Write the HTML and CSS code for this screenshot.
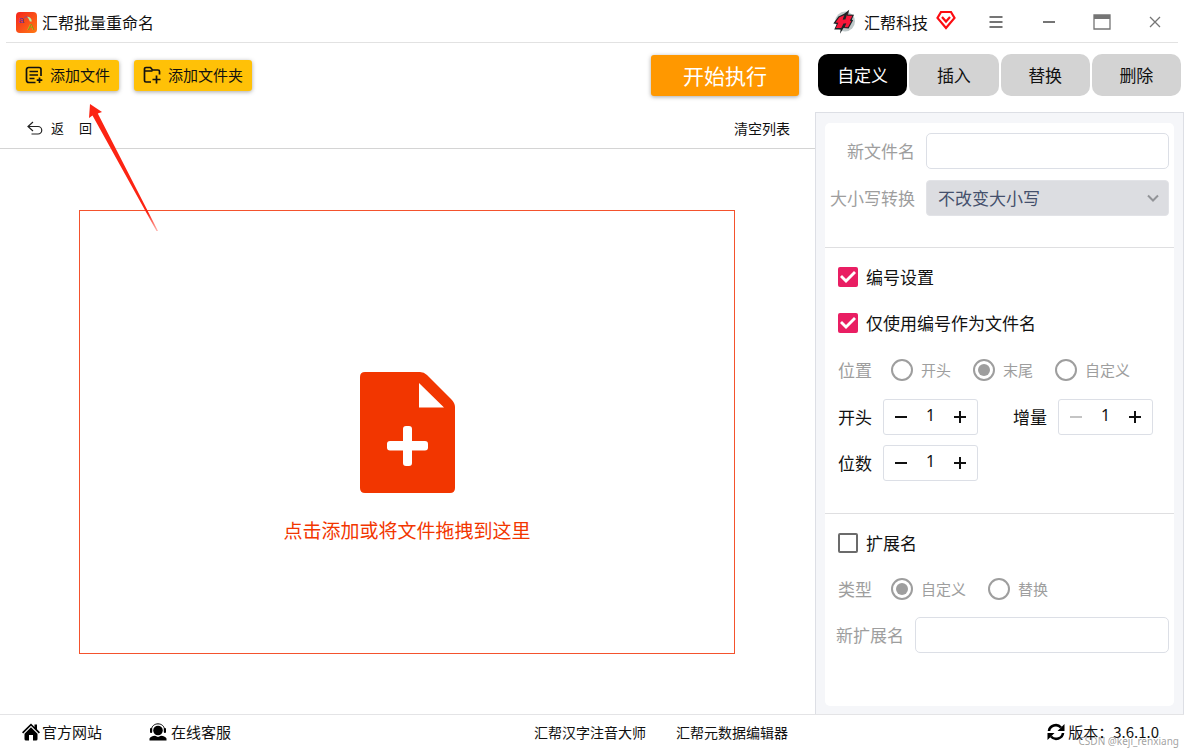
FILE: index.html
```html
<!DOCTYPE html>
<html lang="zh-CN">
<head>
<meta charset="utf-8">
<meta name="viewport" content="width=device-width, initial-scale=1">
<title>汇帮批量重命名</title>
<link rel="stylesheet" href="styles.css">
</head>
<body>
<header class="titlebar">
  <svg class="app-logo" viewBox="0 0 22 22" aria-hidden="true">
    <defs>
      <linearGradient id="logo-bg" x1="0" y1="0" x2="1" y2="1">
        <stop offset="0" stop-color="#f5231c"/>
        <stop offset="1" stop-color="#ff7a14"/>
      </linearGradient>
    </defs>
    <rect width="22" height="22" rx="4" fill="url(#logo-bg)"/>
    <text x="3" y="11" class="logo-small">a</text>
    <text x="12" y="19" class="logo-large">A</text>
    <path d="M8.500 6.500C10 4.500 12 4.800 13 6" fill="none" stroke="#7a4a9a" stroke-width="1"/>
    <path d="M11.500 5C14.500 5 16.500 7 16.500 10L14.500 10C14 8 13 6.500 11.500 5Z" fill="#b9f0a8"/>
  </svg>
  <h1 class="app-name">汇帮批量重命名</h1>
  <div class="brand">
    <svg class="brand-logo" viewBox="0 0 72 84" aria-hidden="true">
      <circle cx="41" cy="42" r="31" fill="#bfc8c9"/>
      <path d="M54 5L50 20L69 21L62 36L66 38L52 64L36 62L25 80L27 67L7 67L15 50L4 48L20 26L38 18Z" fill="#1b2326"/>
      <path d="M49 13L47 24H64L56 39L60 41L50 60H38L43 48H36L29 62H12L20 46L11 45L23 29L40 22L35 36H42Z" fill="#f9163a"/>
      <path d="M40 22L35 36M43 48L38 60" fill="none" stroke="#1b2326" stroke-width="3"/>
    </svg>
    <span>汇帮科技</span>
    <svg class="gem" viewBox="0 0 20 20" fill="none" stroke="#fc0d12" aria-hidden="true">
      <path d="M5 2H15L18.500 8L10 18L1.500 8Z" stroke-width="2.200"/>
      <path d="M6 7L10 11.500L14 7" stroke-width="2.200"/>
    </svg>
  </div>
  <div class="window-controls">
    <button type="button" aria-label="菜单"><svg viewBox="0 0 20 20"><path d="M3.500 5H16.500M3.500 10H16.500M3.500 15H16.500" stroke-width="2"/></svg></button>
    <button type="button" aria-label="最小化"><svg viewBox="0 0 20 20"><path d="M4 10H16" stroke-width="2"/></svg></button>
    <button type="button" aria-label="最大化"><svg viewBox="0 0 20 20"><path d="M2 3H18V17H2Z" stroke-width="1.300"/><path d="M2 5H18" stroke-width="4"/></svg></button>
    <button type="button" aria-label="关闭"><svg viewBox="0 0 20 20"><path d="M5 5L15 15M15 5L5 15" stroke-width="1.300"/></svg></button>
  </div>
</header>

<div class="workspace">
  <main class="files">
    <div class="toolbar">
      <button type="button" class="add-btn">
        <svg viewBox="0 0 18 18" aria-hidden="true"><path d="M16 10V3.500A2 2 0 0 0 14 1.500H3.500A2 2 0 0 0 1.500 3.500V14A2.500 2.500 0 0 0 4 16.500H10.500M4.500 5.500H13M4.500 9H13M4.500 12.500H9.500M14.500 11.500V17M11.700 14.200H17.300"/></svg>
        添加文件
      </button>
      <button type="button" class="add-btn">
        <svg viewBox="0 0 18 18" aria-hidden="true"><path d="M8 16H3A1.500 1.500 0 0 1 1.500 14.500V3A1.500 1.500 0 0 1 3 1.500H7.500L9.500 4H15A1.500 1.500 0 0 1 16.500 5.500V8.500M1.500 5H9.500M13.500 9.500V17.500M9.500 13.500H17.500"/></svg>
        添加文件夹
      </button>
      <button type="button" class="run-btn">开始执行</button>
    </div>
    <div class="list-bar">
      <button type="button" class="back-btn">
        <svg viewBox="0 0 16 16" aria-hidden="true"><path d="M6 2L1 6.500L6 11M1 6.500H11A3.700 3.700 0 0 1 11 14H4.500"/></svg>
        <span>返</span><span class="back-end">回</span>
      </button>
      <button type="button" class="clear-btn">清空列表</button>
    </div>
    <div class="drop-wrap">
      <button type="button" class="drop-zone">
        <svg viewBox="0 0 95 121" aria-hidden="true">
          <path fill-rule="evenodd" d="M5 0H60Q64 0 67 3L91 27Q95 31 95 35V116Q95 121 90 121H5Q0 121 0 116V5Q0 0 5 0ZM59 11V35.500H84ZM46 54Q43 54 43 57V69H30Q27 69 27 72V75.500Q27 78.500 30 78.500H43V91Q43 94 46 94H49Q52 94 52 91V78.500H65Q68 78.500 68 75.500V72Q68 69 65 69H52V57Q52 54 49 54Z"/>
        </svg>
        点击添加或将文件拖拽到这里
      </button>
    </div>
    <svg class="pointer-arrow" viewBox="0 0 70 128" aria-hidden="true">
      <defs>
        <linearGradient id="arrow-fade" gradientUnits="userSpaceOnUse" x1="0" y1="0" x2="0" y2="128">
          <stop offset="0.850" stop-color="#fc2413"/>
          <stop offset="1" stop-color="#fc2413" stop-opacity="0.300"/>
        </linearGradient>
      </defs>
      <path d="M1 0L13 8L8.800 9.500L69 127L67.500 127L3.500 11.500L0 14Z" fill="url(#arrow-fade)"/>
    </svg>
  </main>

  <div class="side">
    <nav class="tabs">
      <button type="button" class="tab tab-active">自定义</button>
      <button type="button" class="tab">插入</button>
      <button type="button" class="tab">替换</button>
      <button type="button" class="tab">删除</button>
    </nav>
    <div class="panel">
      <form class="card">
        <section class="section section-name">
          <div class="field">
            <label class="muted" for="new-name">新文件名</label>
            <input class="text-box" id="new-name" type="text">
          </div>
          <div class="field">
            <label class="muted" for="case">大小写转换</label>
            <div class="select-wrap">
              <select id="case" disabled><option>不改变大小写</option></select>
              <svg viewBox="0 0 12 8" aria-hidden="true"><path d="M1 1.500L6 6.500L11 1.500"/></svg>
            </div>
          </div>
        </section>

        <section class="section section-number">
          <label class="check"><input type="checkbox" checked>编号设置</label>
          <label class="check"><input type="checkbox" checked>仅使用编号作为文件名</label>
          <div class="radios position-row" role="radiogroup" aria-label="位置">
            <span class="radios-title">位置</span>
            <label><input type="radio" name="position" disabled>开头</label>
            <label><input type="radio" name="position" checked disabled>末尾</label>
            <label><input type="radio" name="position" disabled>自定义</label>
          </div>
          <div class="steppers">
            <div class="step-field">
              <label for="start">开头</label>
              <div class="stepper">
                <button type="button" aria-label="减少"><svg viewBox="0 0 14 14"><path d="M1 7H13"/></svg></button>
                <input id="start" type="text" value="1">
                <button type="button" aria-label="增加"><svg viewBox="0 0 14 14"><path d="M1 7H13M7 1V13"/></svg></button>
              </div>
            </div>
            <div class="step-field">
              <label for="increment">增量</label>
              <div class="stepper">
                <button type="button" aria-label="减少" disabled><svg viewBox="0 0 14 14"><path d="M1 7H13"/></svg></button>
                <input id="increment" type="text" value="1">
                <button type="button" aria-label="增加"><svg viewBox="0 0 14 14"><path d="M1 7H13M7 1V13"/></svg></button>
              </div>
            </div>
          </div>
          <div class="steppers">
            <div class="step-field">
              <label for="digits">位数</label>
              <div class="stepper">
                <button type="button" aria-label="减少"><svg viewBox="0 0 14 14"><path d="M1 7H13"/></svg></button>
                <input id="digits" type="text" value="1">
                <button type="button" aria-label="增加"><svg viewBox="0 0 14 14"><path d="M1 7H13M7 1V13"/></svg></button>
              </div>
            </div>
          </div>
        </section>

        <section class="section section-ext">
          <label class="check"><input type="checkbox">扩展名</label>
          <div class="radios" role="radiogroup" aria-label="类型">
            <span class="radios-title">类型</span>
            <label><input type="radio" name="kind" checked disabled>自定义</label>
            <label><input type="radio" name="kind" disabled>替换</label>
          </div>
          <div class="field field-ext">
            <label class="muted" for="new-ext">新扩展名</label>
            <input class="text-box" id="new-ext" type="text">
          </div>
        </section>
      </form>
    </div>
  </div>
</div>

<footer class="statusbar">
  <div class="status-main">
    <div class="support">
      <a href="#site">
        <svg viewBox="0 0 18 18" aria-hidden="true"><path d="M9 0.500L12.500 4V1.500H15V6.300L18 9.300L16.800 10.500L9 2.800L1.200 10.500L0 9.300Z"/><path d="M9 4.300L15.500 10.700V16Q15.500 17.500 14 17.500H11V12H7V17.500H4Q2.500 17.500 2.500 16V10.700Z"/></svg>
        官方网站
      </a>
      <a href="#service" class="service">
        <svg viewBox="0 0 18 18" aria-hidden="true"><circle cx="9" cy="7.500" r="4.800"/><path d="M2.500 7C2.500 -1.200 15.500 -1.200 15.500 7" fill="none" stroke="#000"/><rect x="1" y="5" width="2.200" height="5" rx="1"/><rect x="14.800" y="5" width="2.200" height="5" rx="1"/><path d="M0.500 17.500V15.500Q1.500 13.200 6 12.800L9 14L12 12.800Q16.500 13.200 17.500 15.500V17.500Z"/></svg>
        在线客服
      </a>
    </div>
    <div class="products">
      <a href="#pinyin">汇帮汉字注音大师</a>
      <a href="#metadata">汇帮元数据编辑器</a>
    </div>
  </div>
  <div class="version">
    <svg viewBox="0 0 18 18" aria-hidden="true"><path d="M2 8C2.500 2.500 10 0 14 4.500M16 10C15.500 15.500 8 18 4 13.500" fill="none" stroke="#000" stroke-width="2.600"/><path d="M17.500 1V8H10.500ZM0.500 17V10H7.500Z"/></svg>
    版本：3.6.1.0
    <span class="watermark">CSDN @keji_renxiang</span>
  </div>
</footer>
</body>
</html>
```
FILE: styles.css
```css
* {
  box-sizing: border-box;
}

body {
  margin: 0;
  min-height: 100vh;
  display: flex;
  flex-direction: column;
  background: #fff;
  color: #111;
  font: 15px/24px "Noto Sans CJK SC", sans-serif;
}

button,
input,
select {
  margin: 0;
  padding: 0;
  border: 0;
  background: none;
  color: inherit;
  font: inherit;
}

svg {
  display: block;
  flex: none;
}

a {
  color: inherit;
  text-decoration: none;
}

/* Title bar */
.titlebar {
  display: flex;
  align-items: center;
  height: 43px;
  margin: 0 6px;
  padding: 2px 13px 0 10px;
  border-bottom: 1px solid #e2e2e2;
  font-size: 16px;
}

.app-logo {
  width: 21px;
  height: 21px;
}

.logo-small,
.logo-large {
  font: 10px "Liberation Sans", sans-serif;
  fill: #5a35a8;
}

.logo-large {
  fill: #5fc61e;
}

.app-name {
  margin: 0 auto 0 5px;
  font-size: 16px;
  font-weight: 400;
}

.brand {
  display: flex;
  align-items: center;
  margin-right: 30px;
}

.brand-logo {
  width: 23px;
  height: 27px;
  margin: 0 9px 2px 0;
}

.gem {
  width: 20px;
  height: 20px;
  margin: 0 0 5px 8px;
}

.window-controls {
  display: flex;
  gap: 33px;
}

.window-controls svg {
  width: 20px;
  height: 20px;
  fill: none;
  stroke: #757575;
}

/* Main layout */
.workspace {
  flex: 1;
  display: flex;
}

.files {
  position: relative;
  flex: 1;
  display: flex;
  flex-direction: column;
}

.side {
  width: 369px;
  display: flex;
  flex-direction: column;
}

/* Left side */
.toolbar {
  display: flex;
  align-items: center;
  gap: 15px;
  padding: 12px 16px;
}

.add-btn {
  display: flex;
  align-items: center;
  gap: 7px;
  height: 31px;
  padding: 0 9px 2px;
  border-radius: 3px;
  background: #ffc107;
  box-shadow: 0 1px 4px rgba(0, 0, 0, 0.35);
}

.add-btn svg {
  width: 18px;
  height: 18px;
  fill: none;
  stroke: #111;
  stroke-width: 1.7;
}

.run-btn {
  width: 148px;
  height: 41px;
  margin-left: auto;
  padding-bottom: 2px;
  border-radius: 3px;
  background: #ff9800;
  box-shadow: 0 1px 4px rgba(0, 0, 0, 0.35);
  color: #fff;
  font-size: 21px;
}

.list-bar {
  display: flex;
  align-items: center;
  justify-content: space-between;
  height: 41px;
  padding: 0 25px 1px 27px;
  border-bottom: 1px solid #d4d4d4;
}

.back-btn {
  display: flex;
  align-items: center;
  gap: 8px;
  font-size: 13px;
}

.back-btn svg {
  width: 16px;
  height: 16px;
  fill: none;
  stroke: #222;
  stroke-width: 1.2;
}

.back-end {
  margin-left: 7px;
}

.clear-btn {
  font-size: 14px;
}

.drop-wrap {
  flex: 1;
  display: flex;
  padding: 61px 80px 60px 79px;
}

.drop-zone {
  flex: 1;
  display: flex;
  flex-direction: column;
  align-items: center;
  justify-content: center;
  gap: 23px;
  padding-top: 52px;
  border: 1px solid #f4522d;
  color: #f23600;
  font-size: 19px;
  line-height: 28px;
}

.drop-zone svg {
  width: 95px;
  height: 121px;
  fill: #f23600;
}

.pointer-arrow {
  position: absolute;
  top: 61px;
  left: 89px;
  width: 70px;
  height: 128px;
  pointer-events: none;
}

/* Tabs */
.tabs {
  display: flex;
  gap: 2px;
  padding: 11px 3px 16px;
}

.tab {
  flex: 1;
  height: 42px;
  border-radius: 10px;
  background: #d3d3d3;
  font-size: 17px;
}

.tab-active {
  background: #000;
  color: #fff;
}

/* Settings panel */
.panel {
  flex: 1;
  display: flex;
  padding: 10px 9px 8px;
  border: 1px solid #dddfe5;
  border-bottom: 0;
  background: #f5f6f9;
}

.card {
  flex: 1;
  border-radius: 5px;
  background: #fff;
  font-size: 17px;
}

.section {
  display: flex;
  flex-direction: column;
  gap: 10px;
}

.section + .section {
  border-top: 1px solid #dfdfe1;
}

.section-name {
  gap: 11px;
  padding: 10px 5px 31px 0;
}

.section-number {
  padding: 11px 5px 32px 13px;
}

.section-ext {
  padding: 11px 5px 32px 0;
}

.section-ext .check,
.section-ext .radios {
  padding-left: 13px;
}

.field {
  display: grid;
  grid-template-columns: 90px 1fr;
  gap: 11px;
  align-items: center;
  text-align: right;
}

.field-ext {
  grid-template-columns: 79px 1fr;
}

.muted,
.radios {
  color: #9e9e9e;
}

.text-box {
  width: 100%;
  height: 36px;
  padding: 0 12px;
  border: 1px solid #dcdfe6;
  border-radius: 5px;
}

.select-wrap {
  position: relative;
}

.select-wrap select {
  display: block;
  width: 100%;
  height: 36px;
  padding: 0 11px;
  border: 1px solid #e2e3e7;
  border-radius: 4px;
  appearance: none;
  background: #dcdde1;
  color: #44506c;
  opacity: 1;
}

.select-wrap svg {
  position: absolute;
  top: 14px;
  right: 10px;
  width: 12px;
  height: 8px;
  fill: none;
  stroke: #929498;
  stroke-width: 2;
}

.check {
  display: flex;
  align-items: center;
  gap: 8px;
  height: 36px;
}

.check input {
  appearance: none;
  width: 20px;
  height: 20px;
  border: 2px solid #6b6b6b;
  border-radius: 2px;
}

.check input:checked {
  border: 0;
  background: #e91e63;
}

.check input:checked::before {
  content: "";
  display: block;
  width: 20px;
  height: 20px;
  background: #fff;
  clip-path: polygon(2px 10px, 4px 8px, 8px 12px, 16px 4px, 18px 6px, 8px 16px);
}

.radios {
  display: flex;
  align-items: center;
  gap: 22px;
  height: 36px;
  font-size: 15px;
}

.position-row {
  height: 38px;
}

.radios-title {
  width: 31px;
  font-size: 17px;
  white-space: nowrap;
}

.radios label {
  display: flex;
  align-items: center;
  gap: 8px;
}

.radios input {
  appearance: none;
  display: grid;
  place-items: center;
  width: 22px;
  height: 22px;
  border: 2px solid #9e9e9e;
  border-radius: 50%;
}

.radios input:checked::before {
  content: "";
  width: 12px;
  height: 12px;
  border-radius: 50%;
  background: #9e9e9e;
}

.steppers {
  display: flex;
  gap: 35px;
}

.step-field {
  display: flex;
  align-items: center;
  gap: 11px;
}

.stepper {
  display: flex;
  align-items: center;
  justify-content: space-between;
  width: 95px;
  height: 36px;
  padding: 0 10px;
  border: 1px solid #dcdfe6;
  border-radius: 3px;
}

.stepper input {
  width: 30px;
  padding-bottom: 5px;
  font: 16px/24px "Noto Sans", sans-serif;
  text-align: center;
}

.stepper svg {
  width: 14px;
  height: 14px;
  fill: none;
  stroke: #111;
  stroke-width: 2;
}

.stepper button:disabled svg {
  stroke: #c4c4c4;
}

/* Status bar */
.statusbar {
  display: flex;
  height: 36px;
  padding-bottom: 2px;
  border-top: 1px solid #e4e4e6;
}

.status-main {
  flex: 1;
  display: flex;
  align-items: center;
  justify-content: space-between;
  padding: 0 27px 0 22px;
}

.support,
.products,
.support a {
  display: flex;
  align-items: center;
}

.support {
  gap: 47px;
}

.support a {
  gap: 2px;
}

.support .service {
  gap: 4px;
}

.support svg,
.version svg {
  width: 18px;
  height: 18px;
}

.products {
  gap: 30px;
  font-size: 14px;
}

.version {
  position: relative;
  display: flex;
  align-items: center;
  justify-content: flex-end;
  gap: 3px;
  width: 369px;
  padding-right: 25px;
}

.watermark {
  position: absolute;
  right: 5px;
  bottom: 0;
  color: rgba(120, 120, 120, 0.7);
  font: 10px/14px "Noto Sans", sans-serif;
}
```
